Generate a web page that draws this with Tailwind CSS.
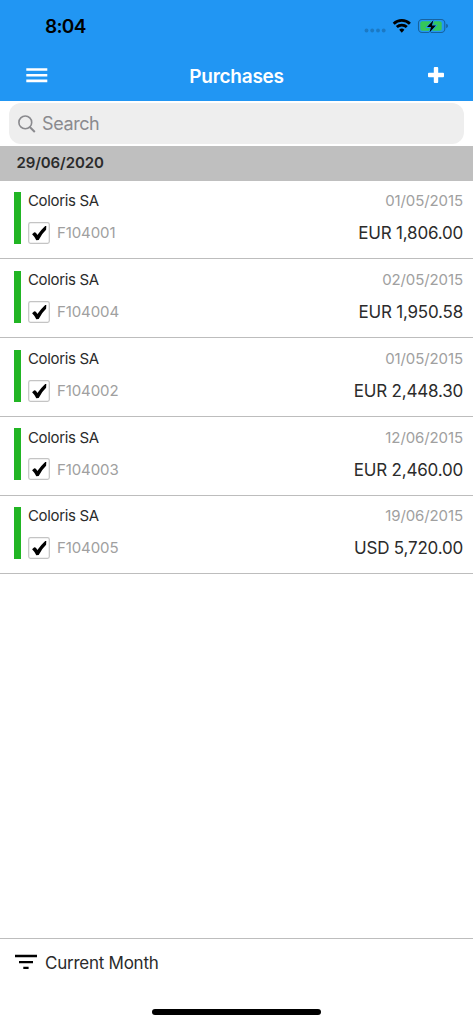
<!DOCTYPE html>
<html lang="en">
<head>
<meta charset="utf-8">
<title>Purchases</title>
<script src="https://cdn.jsdelivr.net/npm/@tailwindcss/browser@4"></script>
</head>
<body class="bg-white">
<div class="w-[473px] h-[1024px] flex flex-col overflow-hidden bg-white font-['Inter',sans-serif] text-[#2b2b2b] whitespace-nowrap">
  <header class="h-[101px] shrink-0 bg-[#2196f3] flex flex-col">
    <div class="h-[52px] flex items-center justify-between pl-[45px] pr-[25px]">
      <span class="text-[19px] leading-6 font-semibold text-black tracking-[-0.7px] pt-[2px]">8:04</span>
      <svg class="w-[84px] h-[18px]" viewBox="364 17 84 18">
        <g fill="#1b79c4"><circle cx="366.5" cy="30.5" r="1.9"/><circle cx="372.2" cy="30.5" r="1.9"/><circle cx="378" cy="30.5" r="1.9"/><circle cx="383.7" cy="30.5" r="1.9"/></g>
        <g fill="none" stroke="#000" stroke-width="2.8"><path d="M393.7 23.7a11.6 11.6 0 0 1 16.2 0"/><path d="M396.8 27.1a7.2 7.2 0 0 1 10 0"/></g>
        <path d="M401.8 32.7l-2.6-2.9a3.8 3.8 0 0 1 5.2 0z"/>
        <rect x="418.5" y="19.5" width="26.3" height="13" rx="3.6" fill="none" stroke="#17629f" stroke-width="1.1"/>
        <rect x="420.3" y="21.2" width="21.4" height="9.6" rx="2" fill="#34c759"/>
        <path d="M446.2 23.8q1.8.6 1.8 2.2t-1.8 2.2z" fill="#17629f"/>
        <path d="M433.4 20.2l-6.4 6.9h4l-1.5 5.5 6.4-7.1h-4z" stroke="#2196f3" stroke-width="1.6" paint-order="stroke"/>
      </svg>
    </div>
    <div class="h-[49px] grid grid-cols-[1fr_auto_1fr] items-center pl-[26px] pr-[29px]">
      <svg class="w-[22px] h-[16px] -mt-[3px]" viewBox="0 0 22 16" fill="#fff"><path d="M.3 1.2h21v2.6H.3zM.3 6.9h21v2.6H.3zM.3 12.6h21v2.6H.3z"/></svg>
      <h1 class="text-[19px] leading-6 font-semibold text-white tracking-[-0.25px] pl-[3px]">Purchases</h1>
      <svg class="w-4 h-4 justify-self-end -mt-[3px]" viewBox="0 0 16 16" fill="#fff"><path d="M6.7 0h2.6q.9 0 .9.9v4.9h4.9q.9 0 .9.9v2.6q0 .9-.9.9h-4.9v4.9q0 .9-.9.9H6.7q-.9 0-.9-.9v-4.9H.9q-.9 0-.9-.9V6.7q0-.9.9-.9h4.9V.9q0-.9.9-.9z"/></svg>
    </div>
  </header>
  <div class="h-[45px] shrink-0 px-[9px] pt-[2px]">
    <div class="w-[454.5px] h-[41px] rounded-[12px] bg-[#eee] flex items-center pl-[9px] gap-[6px]">
      <svg class="w-[18px] h-[18px]" viewBox="0 0 18 18" fill="none" stroke="#8a8a8e" stroke-width="1.6"><circle cx="7.3" cy="7.4" r="6.4"/><path d="M11.8 12l5 5" stroke-width="2"/></svg>
      <span class="text-[18px] leading-6 text-[#8a8a8e] tracking-[-0.4px]">Search</span>
    </div>
  </div>
  <h2 class="h-[34.5px] shrink-0 bg-[#bfbfbf] pl-[16.5px] flex items-center text-[15px] font-semibold pb-px tracking-[-0.1px]">29/06/2020</h2>
  <main id="list" class="flex-1"></main>
  <template id="row">
    <div class="h-[78.8px] border-b border-[#bdbdbd] flex pl-[14px] pr-[10px] pt-[11.5px]">
      <div class="w-[7px] h-[52px] bg-[#21b524] mr-[7px]"></div>
      <div class="flex-1 flex flex-col">
        <div class="h-[18px] flex items-center justify-between text-[15px] pt-px">
          <span class="tracking-[-0.35px]">Coloris SA</span><span data-date class="text-[#a0a0a0] tracking-[-0.1px]"></span>
        </div>
        <div class="h-[22px] mt-[12px] flex items-center">
          <svg class="w-[22px] h-[22px]" viewBox="0 0 22 22"><rect x=".7" y=".7" width="20.6" height="20.6" rx="1.8" fill="#fff" stroke="#c4c4c4" stroke-width="1.2"/><path d="M4.1 12.2l2.2-1.9 1.6.5 1.5 2.3q3.8-5.7 7.8-9.2l1.1.2-.2 3.7q-4.4 4.1-7.4 10.1l-2.4.4q-1.6-3.7-4.2-6.1z"/></svg>
          <span data-code class="ml-[7px] text-[15px] text-[#a0a0a0] tracking-[-0.1px] pt-px"></span>
          <span data-amount class="ml-auto text-[17px] tracking-[-0.2px] pt-[2px]"></span>
        </div>
      </div>
    </div>
  </template>
  <footer class="h-[86px] shrink-0 border-t border-[#bdbdbd] flex flex-col">
    <div class="h-[46px] flex items-center pl-[15px] gap-2">
      <svg class="w-[22px] h-[16px]" viewBox="0 0 22 16"><path d="M0 .7h22v2.5H0zM4 6.9h14v2.3H4zM8.3 12.7h5.3V15H8.3z"/></svg>
      <span class="text-[17px] tracking-[-0.25px] pt-[3px]">Current Month</span>
    </div>
    <div class="w-[169px] h-[6px] rounded-full bg-black mx-auto mt-[24px]"></div>
  </footer>
</div>
<script>
  const rows = [
    ["01/05/2015", "F104001", "EUR 1,806.00"],
    ["02/05/2015", "F104004", "EUR 1,950.58"],
    ["01/05/2015", "F104002", "EUR 2,448.30"],
    ["12/06/2015", "F104003", "EUR 2,460.00"],
    ["19/06/2015", "F104005", "USD 5,720.00"]
  ];
  for (const [date, code, amount] of rows) {
    const node = document.getElementById("row").content.cloneNode(true);
    node.querySelector("[data-date]").textContent = date;
    node.querySelector("[data-code]").textContent = code;
    node.querySelector("[data-amount]").textContent = amount;
    document.getElementById("list").append(node);
  }
</script>
</body>
</html>
